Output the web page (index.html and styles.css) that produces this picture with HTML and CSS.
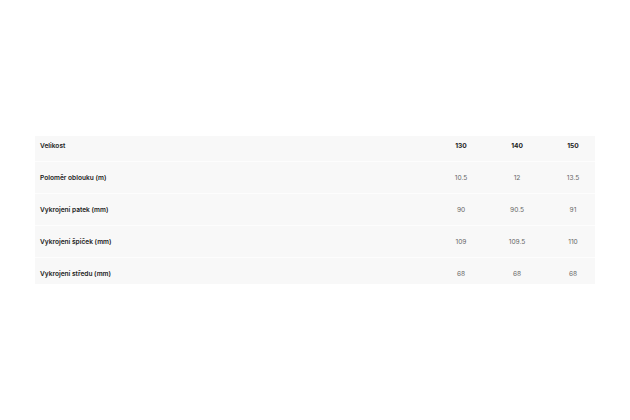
FILE: index.html
```html
<!DOCTYPE html>
<html lang="cs">
<head>
<meta charset="utf-8">
<link rel="stylesheet" href="styles.css">
</head>
<body>
<div class="page">
  <div class="table">
    <div class="row head first">
      <div class="label">Velikost</div>
      <div class="num">130</div>
      <div class="num">140</div>
      <div class="num">150</div>
    </div>
    <div class="row">
      <div class="label">Poloměr oblouku (m)</div>
      <div class="num">10.5</div>
      <div class="num">12</div>
      <div class="num">13.5</div>
    </div>
    <div class="row">
      <div class="label">Vykrojení patek (mm)</div>
      <div class="num">90</div>
      <div class="num">90.5</div>
      <div class="num">91</div>
    </div>
    <div class="row">
      <div class="label">Vykrojení špiček (mm)</div>
      <div class="num">109</div>
      <div class="num">109.5</div>
      <div class="num">110</div>
    </div>
    <div class="row last">
      <div class="label">Vykrojení středu (mm)</div>
      <div class="num">68</div>
      <div class="num">68</div>
      <div class="num">68</div>
    </div>
  </div>
</div>
</body>
</html>
```
FILE: styles.css
```css
html, body {
  margin: 0;
  padding: 0;
  background: #ffffff;
}
body {
  font-family: "Inter", "Liberation Sans", sans-serif;
  font-size: 6.6px;
  color: #1a1a1a;
}
.page {
  width: 630px;
  height: 420px;
  padding: 136px 35px 0 35px;
  box-sizing: border-box;
}
.table {
  display: flex;
  flex-direction: column;
  gap: 1px;
  background: #fdfdfd;
}
.row {
  display: grid;
  grid-template-columns: 1fr 56px 56px 56px;
  align-items: center;
  background: #f8f8f8;
  padding: 10px 0 9px 0;
  line-height: 12px;
}
.row.first {
  padding-top: 4px;
  padding-bottom: 9px;
}
.row.last {
  padding-bottom: 4px;
}
.label {
  padding-left: 5px;
  font-weight: 600;
  color: #222222;
}
.num {
  padding-left: 12px;
  text-align: center;
  color: #666666;
}
.head .num {
  font-weight: 700;
  color: #222222;
}
```
